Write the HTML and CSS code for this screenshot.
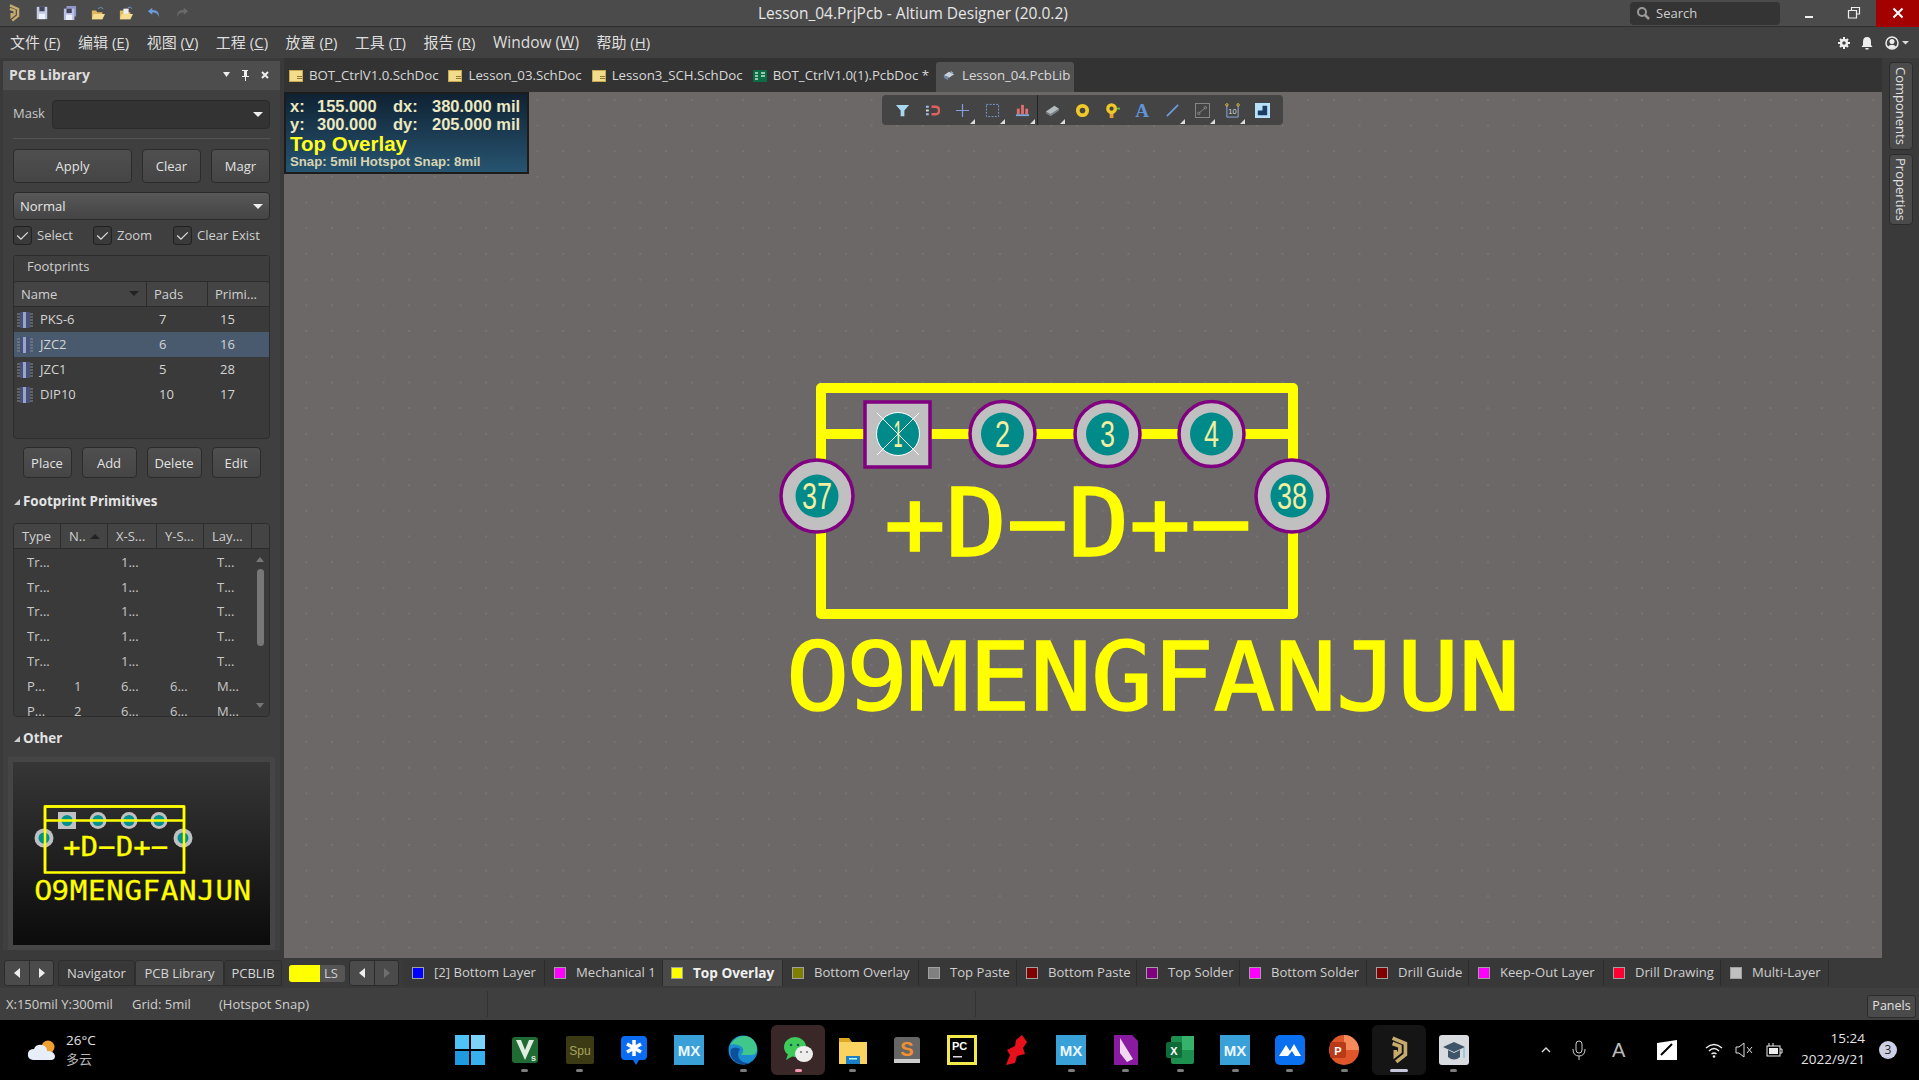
FILE: index.html
```html
<!DOCTYPE html>
<html lang="zh">
<head>
<meta charset="utf-8">
<title>Lesson_04.PrjPcb - Altium Designer (20.0.2)</title>
<link rel="stylesheet" href="styles.css">
</head>
<body>
<svg class="defs" width="0" height="0">
  <symbol id="doc" viewBox="0 0 14 12"><rect x="0.5" y="0.5" width="13" height="11" fill="#f3dc8c" stroke="#c9a94f"/><rect x="8" y="6" width="5" height="1" fill="#8a7a3a"/><rect x="8" y="8" width="5" height="1" fill="#8a7a3a"/></symbol>
  <symbol id="chip" viewBox="0 0 16 18"><rect x="3" y="1" width="10" height="16" fill="#46527a"/><rect x="6" y="1" width="3" height="16" fill="#99a4c8"/><path d="M0 3h3M0 6h3M0 9h3M0 12h3M0 15h3M13 3h3M13 6h3M13 9h3M13 12h3M13 15h3" stroke="#8c8c8c" stroke-width="1"/></symbol>
  <symbol id="logo" viewBox="0 0 24 32"><path d="M5 3 L19 9 V21 L9 29 M5 9 L13 12 V18 L8 22 V16" fill="none" stroke="#c7ab6c" stroke-width="4"/></symbol>
</svg>

<header class="titlebar">
  <div class="qa">
    <svg class="qa-logo"><use href="#logo"/></svg>
    <svg class="qa-ic" viewBox="0 0 16 16"><rect x="2" y="1" width="12" height="14" fill="#c4cbe6"/><rect x="5" y="1" width="6" height="5" fill="#41465c"/><rect x="4.500" y="9" width="7" height="6" fill="#f0f2ff"/></svg>
    <svg class="qa-ic" viewBox="0 0 16 16"><rect x="4" y="0" width="11" height="12" fill="#8f96c8"/><rect x="1" y="3" width="12" height="13" fill="#b9c0e6"/><rect x="4" y="3" width="6" height="5" fill="#41465c"/><rect x="3.500" y="10" width="7" height="6" fill="#eef0ff"/></svg>
    <svg class="qa-ic" viewBox="0 0 16 16"><path d="M1 5h5l1 2h6v8H1z" fill="#e0b95c"/><path d="M3 9h13l-3 6H1z" fill="#f5dd92"/><path d="M8 3 Q11 0 14 3" fill="none" stroke="#6e9ad0"/></svg>
    <svg class="qa-ic" viewBox="0 0 16 16"><path d="M1 5h5l1 2h6v8H1z" fill="#e0b95c"/><path d="M3 9h13l-3 6H1z" fill="#f5dd92"/><rect x="5" y="3" width="6" height="6" fill="#eee"/><path d="M10 2 Q13 0 15 3" fill="none" stroke="#6e9ad0"/></svg>
    <svg class="qa-ic" viewBox="0 0 16 16"><path d="M6 2 L1 6 L6 10 V7.500 Q12 7 14 13 Q14 4 6 4.500z" fill="#6c9ad8"/></svg>
    <svg class="qa-ic" viewBox="0 0 16 16"><path d="M10 2 L15 6 L10 10 V7.500 Q4 7 2 13 Q2 4 10 4.500z" fill="#6a6a6a"/></svg>
  </div>
  <div class="title-text">Lesson_04.PrjPcb - Altium Designer (20.0.2)</div>
  <div class="search">
    <svg class="search-ic" viewBox="0 0 14 14"><circle cx="6" cy="6" r="4" fill="none" stroke="#9a9a9a" stroke-width="2"/><path d="M9 9l4 4" stroke="#9a9a9a" stroke-width="2.500"/></svg>
    <span>Search</span>
  </div>
  <div class="winbtn"><svg viewBox="0 0 14 14"><rect x="3" y="10" width="8" height="2" fill="#eee"/></svg></div>
  <div class="winbtn"><svg viewBox="0 0 14 14"><path d="M4.500 4V1.500H12.500V8H10M1.500 4.500H9.500V12H1.500z" fill="none" stroke="#eee" stroke-width="1.200"/></svg></div>
  <div class="winbtn close"><svg viewBox="0 0 14 14"><path d="M2.500 2.500l9 9M11.500 2.500l-9 9" stroke="#fff" stroke-width="2"/></svg></div>
</header>

<nav class="menubar">
  <span class="m">文件 (<u>F</u>)</span>
  <span class="m">编辑 (<u>E</u>)</span>
  <span class="m">视图 (<u>V</u>)</span>
  <span class="m">工程 (<u>C</u>)</span>
  <span class="m">放置 (<u>P</u>)</span>
  <span class="m">工具 (<u>T</u>)</span>
  <span class="m">报告 (<u>R</u>)</span>
  <span class="m win">Window (<u>W</u>)</span>
  <span class="m">帮助 (<u>H</u>)</span>
  <div class="menu-right">
    <svg class="mr-ic" viewBox="0 0 14 14"><circle cx="7" cy="7" r="3" fill="none" stroke="#eee" stroke-width="2.500"/><path d="M7 1v2M7 11v2M1 7h2M11 7h2M3 3l1.500 1.500M9.500 9.500L11 11M11 3L9.500 4.500M4.500 9.500L3 11" stroke="#eee" stroke-width="2"/></svg>
    <svg class="mr-ic" viewBox="0 0 14 14"><path d="M7 1Q3 1 3 6V9L1.500 11H12.500L11 9V6Q11 1 7 1z" fill="#eee"/><rect x="5.500" y="12" width="3" height="1.500" fill="#eee"/></svg>
    <svg class="mr-user" viewBox="0 0 26 14"><circle cx="7" cy="7" r="6" fill="none" stroke="#eee" stroke-width="1.500"/><circle cx="7" cy="5.500" r="2.500" fill="#eee"/><path d="M2.500 11Q7 6.500 11.500 11L7 13z" fill="#eee"/><path d="M17 5h7l-3.500 3.500z" fill="#ddd"/></svg>
  </div>
</nav>

<div class="workspace">
  <aside class="leftcol">
    <section class="panel">
      <div class="panel-head">
        <span class="panel-title">PCB Library</span>
        <svg class="ph-ic" viewBox="0 0 58 12"><path d="M0 3h7l-3.500 5z" fill="#eee"/><path d="M19 1h6v1h-1v5h2v1h-3v4h-1V8h-3V7h2V2h-2z" fill="#eee"/><path d="M39 3l6 6M45 3l-6 6" stroke="#eee" stroke-width="2"/></svg>
      </div>
      <div class="panel-body">
        <div class="mask-row">
          <span class="mask-label">Mask</span>
          <div class="mask-field"><i class="caret"></i></div>
        </div>
        <div class="divider"></div>
        <div class="btn-row">
          <button class="btn b-apply">Apply</button>
          <button class="btn b-clear">Clear</button>
          <button class="btn b-clear">Magr</button>
        </div>
        <div class="select">Normal<i class="caret"></i></div>
        <div class="check-row">
          <label class="chk c1"><svg class="box" viewBox="0 0 18 18"><rect x="0.500" y="0.500" width="17" height="17" rx="3" fill="#3a3a3a" stroke="#222"/><path d="M4 9l3.500 3.500L14 6" fill="none" stroke="#ddd" stroke-width="1.200"/></svg>Select</label>
          <label class="chk c2"><svg class="box" viewBox="0 0 18 18"><rect x="0.500" y="0.500" width="17" height="17" rx="3" fill="#3a3a3a" stroke="#222"/><path d="M4 9l3.500 3.500L14 6" fill="none" stroke="#ddd" stroke-width="1.200"/></svg>Zoom</label>
          <label class="chk"><svg class="box" viewBox="0 0 18 18"><rect x="0.500" y="0.500" width="17" height="17" rx="3" fill="#3a3a3a" stroke="#222"/><path d="M4 9l3.500 3.500L14 6" fill="none" stroke="#ddd" stroke-width="1.200"/></svg>Clear Exist</label>
        </div>
        <div class="fp-box">
          <div class="fp-title">Footprints</div>
          <div class="fp-table">
            <div class="fp-row fp-head"><span class="hc">Name<i class="sort-d"></i></span><span class="hc">Pads</span><span class="hc">Primi...</span></div>
            <div class="fp-row"><span class="nm"><svg class="chip"><use href="#chip"/></svg>PKS-6</span><span class="pd">7</span><span class="pr">15</span></div>
            <div class="fp-row sel"><span class="nm"><svg class="chip"><use href="#chip"/></svg>JZC2</span><span class="pd">6</span><span class="pr">16</span></div>
            <div class="fp-row"><span class="nm"><svg class="chip"><use href="#chip"/></svg>JZC1</span><span class="pd">5</span><span class="pr">28</span></div>
            <div class="fp-row"><span class="nm"><svg class="chip"><use href="#chip"/></svg>DIP10</span><span class="pd">10</span><span class="pr">17</span></div>
          </div>
        </div>
        <div class="action-row">
          <button class="btn a1">Place</button>
          <button class="btn a2">Add</button>
          <button class="btn a2">Delete</button>
          <button class="btn a1">Edit</button>
        </div>
        <div class="sec-head h1"><i class="tri"></i>Footprint Primitives</div>
        <div class="prim-table">
          <div class="prim-row prim-head"><span>Type</span><span>N..<i class="sort-u"></i></span><span>X-S...</span><span>Y-S...</span><span>Lay...</span></div>
          <div class="prim-body">
            <div class="prim-rows">
              <div class="prim-row"><span>Tr...</span><span></span><span>1...</span><span></span><span>T...</span></div>
              <div class="prim-row"><span>Tr...</span><span></span><span>1...</span><span></span><span>T...</span></div>
              <div class="prim-row"><span>Tr...</span><span></span><span>1...</span><span></span><span>T...</span></div>
              <div class="prim-row"><span>Tr...</span><span></span><span>1...</span><span></span><span>T...</span></div>
              <div class="prim-row"><span>Tr...</span><span></span><span>1...</span><span></span><span>T...</span></div>
              <div class="prim-row"><span>P...</span><span>1</span><span>6...</span><span>6...</span><span>M...</span></div>
              <div class="prim-row"><span>P...</span><span>2</span><span>6...</span><span>6...</span><span>M...</span></div>
            </div>
            <div class="scroll"><i class="s-up"></i><i class="s-thumb"></i><i class="s-down"></i></div>
          </div>
        </div>
        <div class="sec-head h2"><i class="tri"></i>Other</div>
        <div class="preview">
          <svg class="mini" viewBox="13 761 257 183">
            <path class="m-line" d="M45 805.500H184V871.500H45Z"/>
            <rect class="m-pad" x="58" y="811" width="18" height="17"/><circle class="m-hole" cx="67" cy="819.500" r="5.500"/>
            <circle class="m-pad" cx="98" cy="819.500" r="8.500"/><circle class="m-hole" cx="98" cy="819.500" r="5.500"/>
            <circle class="m-pad" cx="129" cy="819.500" r="8.500"/><circle class="m-hole" cx="129" cy="819.500" r="5.500"/>
            <circle class="m-pad" cx="159" cy="819.500" r="8.500"/><circle class="m-hole" cx="159" cy="819.500" r="5.500"/>
            <circle class="m-pad" cx="44" cy="837" r="9.500"/><circle class="m-hole" cx="44" cy="837" r="5.500"/>
            <circle class="m-pad" cx="183" cy="837" r="9.500"/><circle class="m-hole" cx="183" cy="837" r="5.500"/>
            <path class="m-line" d="M45 805.500H184M45 819.500H184M45 805.500V871.500M184 805.500V871.500"/>
            <text class="mini-a" transform="translate(63 855) scale(1.100 1)">+D−D+−</text>
            <text class="mini-b" transform="translate(34 899) scale(1.100 1)"><tspan class="zero">0</tspan><tspan x="16">9MENGFANJUN</tspan></text>
          </svg>
        </div>
      </div>
    </section>
    <div class="left-tabs">
      <div class="navpair"><i class="nl"></i><i class="nr"></i></div>
      <span class="ltab t-nav">Navigator</span>
      <span class="ltab on t-lib">PCB Library</span>
      <span class="ltab t-pcb">PCBLIB</span>
    </div>
  </aside>

  <main class="center">
    <div class="doctabs">
      <span class="dt"><svg class="dt-ic"><use href="#doc"/></svg>BOT_CtrlV1.0.SchDoc</span>
      <span class="dt"><svg class="dt-ic"><use href="#doc"/></svg>Lesson_03.SchDoc</span>
      <span class="dt"><svg class="dt-ic"><use href="#doc"/></svg>Lesson3_SCH.SchDoc</span>
      <span class="dt"><svg class="dt-ic" viewBox="0 0 14 12"><rect width="14" height="12" fill="#0d6b46"/><path d="M2 3h3M2 6h3M2 9h3M8 3h4M8 6h4" stroke="#bfe8d0" stroke-width="1.500"/></svg>BOT_CtrlV1.0(1).PcbDoc *</span>
      <span class="dt active"><svg class="dt-ic" viewBox="0 0 14 14"><path d="M1 6l6-4 6 3-6 4z" fill="#c8d0dc"/><path d="M1 9l5 3V8L1 6z" fill="#6f8aa8"/><path d="M9 1l3 2-2 2z" fill="#8fb0d0"/></svg>Lesson_04.PcbLib</span>
    </div>
    <div class="canvas">
      <svg class="board" viewBox="284 92 1598 866">
        <path class="y" d="M821 388H1293V614H821ZM821 434H1293"/>
        <rect class="pad" x="865" y="402" width="65" height="65"/>
        <circle class="hole" cx="898" cy="434" r="21.500"/>
        <circle class="sel-ring" cx="898" cy="434" r="21.500"/>
        <path class="sel-x" d="M877 413L919 455M919 413L877 455"/>
        <text class="pn" x="898" y="447" text-anchor="middle" textLength="9" lengthAdjust="spacingAndGlyphs">1</text>
        <circle class="pad" cx="1002.500" cy="434" r="32.500"/><circle class="hole" cx="1002.500" cy="434" r="21.500"/>
        <text class="pn" x="1002.500" y="447" text-anchor="middle" textLength="15" lengthAdjust="spacingAndGlyphs">2</text>
        <circle class="pad" cx="1107.500" cy="434" r="32.500"/><circle class="hole" cx="1107.500" cy="434" r="21.500"/>
        <text class="pn" x="1107.500" y="447" text-anchor="middle" textLength="15" lengthAdjust="spacingAndGlyphs">3</text>
        <circle class="pad" cx="1211.500" cy="434" r="32.500"/><circle class="hole" cx="1211.500" cy="434" r="21.500"/>
        <text class="pn" x="1211.500" y="447" text-anchor="middle" textLength="15" lengthAdjust="spacingAndGlyphs">4</text>
        <circle class="pad" cx="817" cy="496" r="36"/><circle class="hole" cx="817" cy="496" r="21.500"/>
        <text class="pn" x="817" y="509" text-anchor="middle" textLength="30" lengthAdjust="spacingAndGlyphs">37</text>
        <circle class="pad" cx="1292" cy="496" r="36"/><circle class="hole" cx="1292" cy="496" r="21.500"/>
        <text class="pn" x="1292" y="509" text-anchor="middle" textLength="30" lengthAdjust="spacingAndGlyphs">38</text>
        <text class="big" transform="translate(884 556) scale(1.080 1)">+D−D+−</text>
        <text class="big" transform="translate(785 710) scale(1.080 1)"><tspan class="zero">0</tspan><tspan x="56.700">9MENGFANJUN</tspan></text>
      </svg>
      <div class="info">
        <div class="info-l"><span class="i1">x:</span><span class="i2">155.000</span><span class="i3">dx:</span><span class="i4">380.000 mil</span></div>
        <div class="info-l"><span class="i1">y:</span><span class="i2">300.000</span><span class="i3">dy:</span><span class="i4">205.000 mil</span></div>
        <div class="info-layer">Top Overlay</div>
        <div class="info-snap">Snap: 5mil Hotspot Snap: 8mil</div>
      </div>
      <div class="toolbar">
        <span class="tb"><svg viewBox="0 0 16 16"><path d="M1 2H15L10 8V14H6V8z" fill="#a8d8f0"/></svg></span>
        <span class="tb"><svg viewBox="0 0 16 16"><path d="M7 4H11Q15 4 15 8T11 12H7" fill="none" stroke="#e06060" stroke-width="2.500"/><path d="M1 4h3M1 12h3" stroke="#9cc0ec" stroke-width="2"/><path d="M1 8h3" stroke="#e0e0e0" stroke-width="2"/></svg></span>
        <span class="tb cn"><svg viewBox="0 0 16 16"><path d="M8 1V15M1 8H15" stroke="#7e9fdc" stroke-width="1.300"/></svg></span>
        <span class="tb cn"><svg viewBox="0 0 16 16"><rect x="1.500" y="1.500" width="13" height="13" fill="none" stroke="#7e9fdc" stroke-dasharray="2 1.500"/></svg></span>
        <span class="tb cn sep"><svg viewBox="0 0 16 16"><path d="M1 13H15" stroke="#7ea8e0" stroke-width="2"/><rect x="2" y="6" width="3" height="6" fill="#e07070"/><rect x="6.500" y="2" width="3" height="10" fill="#e07070"/><rect x="11" y="6" width="3" height="6" fill="#e07070"/></svg></span>
        <span class="tb cn"><svg viewBox="0 0 16 16"><path d="M1 9L10 3L15 6L6 12z" fill="#b4bcc0"/><path d="M1 9L6 12V14L1 11zM6 12L15 6V8L6 14z" fill="#7c8488"/></svg></span>
        <span class="tb"><svg viewBox="0 0 16 16"><circle cx="8" cy="8" r="5" fill="none" stroke="#f0c828" stroke-width="4"/></svg></span>
        <span class="tb"><svg viewBox="0 0 16 16"><path d="M10 6H16" stroke="#50c050" stroke-width="2"/><rect x="5" y="10" width="4" height="6" fill="#e8a030"/><circle cx="7" cy="6" r="4" fill="none" stroke="#f0c828" stroke-width="3.500"/></svg></span>
        <span class="tb"><span class="tb-a">A</span></span>
        <span class="tb cn"><svg viewBox="0 0 16 16"><path d="M2 14L14 2" stroke="#6a9ad8" stroke-width="1.800"/></svg></span>
        <span class="tb cn"><svg viewBox="0 0 16 16"><rect x="0.500" y="0.500" width="15" height="15" fill="none" stroke="#8a8a8a"/><path d="M4 11L11 5" stroke="#888" stroke-width="1"/><circle cx="4" cy="11" r="1.300" fill="none" stroke="#888"/><circle cx="11" cy="5" r="1.300" fill="none" stroke="#888"/></svg></span>
        <span class="tb cn"><svg viewBox="0 0 16 16"><path d="M2 3V15H14V3" fill="none" stroke="#8fb0e0"/><circle cx="2" cy="2" r="1.300" fill="none" stroke="#e8c040"/><circle cx="14" cy="2" r="1.300" fill="none" stroke="#e8c040"/><text class="tb-10" x="8" y="12" text-anchor="middle">10</text></svg></span>
        <span class="tb"><svg viewBox="0 0 16 16"><rect width="16" height="16" fill="#b8e0f8"/><path d="M3 13V8H8V3H13V13z" fill="#1c3c64"/></svg></span>
      </div>
    </div>
    <div class="layerbar">
      <div class="ls"><i class="ls-sw"></i><span>LS</span></div>
      <div class="navpair small"><i class="nl"></i><i class="nr dim"></i></div>
      <span class="lt l1"><i class="sw blue"></i>[2] Bottom Layer</span>
      <span class="lt l2"><i class="sw mag"></i>Mechanical 1</span>
      <span class="lt on l3"><i class="sw yel"></i>Top Overlay</span>
      <span class="lt l4"><i class="sw oli"></i>Bottom Overlay</span>
      <span class="lt l5"><i class="sw gry"></i>Top Paste</span>
      <span class="lt l6"><i class="sw mar"></i>Bottom Paste</span>
      <span class="lt l7"><i class="sw pur"></i>Top Solder</span>
      <span class="lt l8"><i class="sw mag"></i>Bottom Solder</span>
      <span class="lt l9"><i class="sw mar"></i>Drill Guide</span>
      <span class="lt l10"><i class="sw mag"></i>Keep-Out Layer</span>
      <span class="lt l11"><i class="sw red"></i>Drill Drawing</span>
      <span class="lt l12"><i class="sw sil"></i>Multi-Layer</span>
    </div>
  </main>

  <aside class="rightstrip">
    <span class="vtab v1">Components</span>
    <span class="vtab v2">Properties</span>
  </aside>
</div>

<footer class="status">
  <span class="st s1">X:150mil Y:300mil</span>
  <span class="st s2">Grid: 5mil</span>
  <span class="st s3">(Hotspot Snap)</span>
  <i class="st-div d1"></i>
  <i class="st-div d2"></i>
  <button class="panels">Panels</button>
</footer>

<div class="taskbar">
  <div class="weather">
    <svg class="w-ic" viewBox="0 0 30 24"><circle cx="21" cy="9" r="6.500" fill="#f0a030"/><path d="M6 22Q0 21 1 15Q2 11 7 11Q9 6 15 7Q20 8 20 13Q27 13 28 18Q28 22 24 22z" fill="#e8eef8"/></svg>
    <div class="w-t"><div>26°C</div><div class="w-s">多云</div></div>
  </div>
  <div class="apps">
    <span class="app"><svg viewBox="0 0 30 30"><rect x="0" y="0" width="14" height="14" fill="#4fc3f7"/><rect x="16" y="0" width="14" height="14" fill="#7cd4fa"/><rect x="0" y="16" width="14" height="14" fill="#1e9ae0"/><rect x="16" y="16" width="14" height="14" fill="#38b0ee"/></svg></span>
    <span class="app dot"><svg viewBox="0 0 30 30"><rect x="2" y="2" width="26" height="26" rx="3" fill="#1f6b33"/><path d="M6 5L15 25L24 5H19L15 15L11 5z" fill="#dfeee0"/><text class="ti-s" x="21" y="26">s</text></svg></span>
    <span class="app dot"><svg viewBox="0 0 30 30"><rect x="1" y="1" width="28" height="28" rx="2" fill="#3b3a14"/><text class="ti-spu" x="15" y="20" text-anchor="middle">Spu</text></svg></span>
    <span class="app"><svg viewBox="0 0 30 30"><path d="M6 1H24Q28 1 28 5V21Q28 25 24 25H20L17 30L14 25H6Q2 25 2 21V5Q2 1 6 1z" fill="#0a6cf0"/><path d="M15 5V21M8 9L22 17M22 9L8 17" stroke="#fff" stroke-width="3.500"/></svg></span>
    <span class="app"><svg viewBox="0 0 30 30"><rect width="30" height="30" fill="#3aa0d8"/><text class="ti-mx" x="15" y="21" text-anchor="middle">MX</text></svg></span>
    <span class="app dot"><svg viewBox="0 0 30 30"><circle cx="15" cy="15" r="14.500" fill="#1b8ccf"/><path d="M2 10Q8 0 18 1Q28 3 29 14Q29 20 23 20H13Q17 16 14 12Q8 8 2 10z" fill="#3fc88a"/><path d="M3 14Q8 11 12 14Q7 22 15 27Q20 29 24 27Q16 32 8 27Q1 22 3 14z" fill="#0c4f9a"/></svg></span>
    <span class="app tile-w"><svg viewBox="0 0 30 30"><ellipse cx="12" cy="12" rx="11" ry="10" fill="#3ecb5a"/><path d="M5 19L3 25L10 21z" fill="#3ecb5a"/><ellipse cx="21" cy="19" rx="9" ry="8" fill="#eee"/><circle cx="8" cy="10" r="1.300" fill="#155"/><circle cx="15" cy="10" r="1.300" fill="#155"/><circle cx="18" cy="17" r="1.100" fill="#777"/><circle cx="24" cy="17" r="1.100" fill="#777"/></svg></span>
    <span class="app dot"><svg viewBox="0 0 30 30"><path d="M1 3H11L14 7H29V29H1z" fill="#e0a820"/><rect x="1" y="7" width="28" height="22" fill="#fbd360"/><rect x="8" y="21" width="14" height="8" fill="#1a7ec8"/><rect x="11" y="23" width="8" height="1.500" fill="#bfe"/></svg></span>
    <span class="app"><svg viewBox="0 0 30 30"><rect x="2" y="2" width="26" height="26" rx="3" fill="#666"/><rect x="2" y="24" width="26" height="4" fill="#ccc"/><text class="ti-s2" x="15" y="21" text-anchor="middle">S</text></svg></span>
    <span class="app"><svg viewBox="0 0 30 30"><rect x="1.500" y="1.500" width="27" height="27" fill="#000" stroke="#f3e94a" stroke-width="3"/><text class="ti-pc" x="5" y="15">PC</text><rect x="6" y="21" width="9" height="1.500" fill="#ddd"/></svg></span>
    <span class="app"><svg viewBox="0 0 30 30"><path d="M20 0L25 7L21 13L23 19L15 21L13 28L4 30L8 20L5 15L13 11L14 5z" fill="#e8101a"/></svg></span>
    <span class="app dot"><svg viewBox="0 0 30 30"><rect width="30" height="30" fill="#3aa0d8"/><text class="ti-mx" x="15" y="21" text-anchor="middle">MX</text></svg></span>
    <span class="app dot"><svg viewBox="0 0 30 30"><path d="M3 0H21L27 6V30H3z" fill="#8a1aa0"/><path d="M9 3L22 24L16 27L9 18z" fill="#f0d8f0"/></svg></span>
    <span class="app dot"><svg viewBox="0 0 30 30"><rect x="6" y="1" width="23" height="28" rx="2" fill="#1d8f4e"/><rect x="17" y="1" width="12" height="14" fill="#37b26a"/><rect x="1" y="7" width="16" height="16" rx="2" fill="#0f6b38"/><text class="ti-x" x="9" y="20" text-anchor="middle">X</text></svg></span>
    <span class="app dot"><svg viewBox="0 0 30 30"><rect width="30" height="30" fill="#3aa0d8"/><text class="ti-mx" x="15" y="21" text-anchor="middle">MX</text></svg></span>
    <span class="app dot"><svg viewBox="0 0 30 30"><rect width="30" height="30" rx="5" fill="#0a70f0"/><path d="M4 21L11 10L15 16L19 9L26 21H20L17 16L13 21z" fill="#fff"/></svg></span>
    <span class="app dot"><svg viewBox="0 0 30 30"><circle cx="15" cy="15" r="15" fill="#e0552a"/><path d="M15 0A15 15 0 0 1 30 15H15z" fill="#f58a5c"/><rect x="1" y="7" width="16" height="16" rx="2" fill="#b83a18"/><text class="ti-x" x="9" y="20" text-anchor="middle">P</text></svg></span>
    <span class="app tile-a dot-wide"><svg viewBox="0 0 24 32"><use href="#logo"/></svg></span>
    <span class="app dot"><svg viewBox="0 0 30 30"><rect width="30" height="30" rx="3" fill="#d8dce0"/><path d="M4 12L15 7L26 12L15 17z" fill="#3e5468"/><path d="M9 15V22Q15 27 21 22V15L15 18z" fill="#3e5468"/><path d="M25 13V23" stroke="#5fb8d8"/></svg></span>
  </div>
  <div class="tray">
    <svg class="tr t-ch" viewBox="0 0 12 12"><path d="M2 8L6 4L10 8" fill="none" stroke="#ddd" stroke-width="1.300"/></svg>
    <svg class="tr t-mic" viewBox="0 0 16 20"><rect x="5" y="1" width="6" height="12" rx="3" fill="none" stroke="#ccc"/><path d="M2 9Q2 16 8 16T14 9M8 16V20" fill="none" stroke="#ccc"/></svg>
    <span class="t-a">A</span>
    <svg class="tr t-ink" viewBox="0 0 20 20"><path d="M0 3L20 0V20H0z" fill="#fff"/><path d="M4 15L15 4" stroke="#000" stroke-width="2"/></svg>
    <svg class="tr t-wifi" viewBox="0 0 18 16"><path d="M1 6Q9 -1 17 6M4 9Q9 4 14 9M6.500 12Q9 10 11.500 12" fill="none" stroke="#eee" stroke-width="1.500"/><circle cx="9" cy="14.500" r="1.300" fill="#eee"/></svg>
    <svg class="tr t-vol" viewBox="0 0 18 16"><path d="M1 5H4L9 1V15L4 11H1z" fill="none" stroke="#ddd"/><path d="M12 5L17 11M17 5L12 11" stroke="#ddd"/></svg>
    <svg class="tr t-bat" viewBox="0 0 18 16"><rect x="2" y="4" width="13" height="10" fill="none" stroke="#eee"/><rect x="4" y="6" width="9" height="6" fill="#eee"/><path d="M15 7H17V11H15M4 4V1M8 4V1" fill="none" stroke="#eee"/></svg>
    <div class="clock"><div>15:24</div><div>2022/9/21</div></div>
    <span class="badge">3</span>
  </div>
</div>
</body>
</html>
```
FILE: styles.css
```css
* { box-sizing: border-box; }
html, body { margin: 0; padding: 0; }
body {
  width: 1919px; height: 1080px; overflow: hidden;
  display: flex; flex-direction: column;
  background: #3e3e3e; color: #d8d8d8;
  font-family: "Open Sans", "Noto Sans CJK SC", sans-serif; font-size: 13px; line-height: 1;
}
.defs { position: absolute; }
i { display: block; font-style: normal; }
button { font: inherit; color: inherit; padding: 0; }

/* title bar */
.titlebar { height: 27px; flex: none; display: flex; align-items: center; background: #4b4b4b; border-bottom: 1px solid #2f2f2f; position: relative; }
.qa { display: flex; align-items: center; padding-left: 7px; }
.qa-logo { width: 14px; height: 20px; margin-right: 14px; }
.qa-ic { width: 14px; height: 14px; margin-right: 14px; }
.title-text { position: absolute; left: 758px; top: 6px; font-size: 15.500px; color: #e6e6e6; }
.search { margin-left: auto; width: 150px; height: 23px; display: flex; align-items: center; gap: 6px; padding-left: 6px; background: #343434; border-radius: 4px; margin-right: 6px; color: #cfcfcf; font-size: 13px; }
.search-ic { width: 14px; height: 14px; }
.winbtn { width: 45px; height: 27px; display: flex; align-items: center; justify-content: center; }
.winbtn svg { width: 14px; height: 14px; }
.winbtn.close { width: 43px; background: #a30000; }

/* menu */
.menubar { height: 31px; flex: none; display: flex; align-items: center; background: #414141; padding-left: 10px; gap: 17.500px; font-size: 15px; color: #dedede; }
.m { white-space: nowrap; }
.m.win { font-size: 15.500px; }
.menu-right { margin-left: auto; display: flex; align-items: center; gap: 9px; padding-right: 8px; }
.mr-ic { width: 14px; height: 14px; }
.mr-user { width: 26px; height: 14px; margin-left: 2px; }

/* workspace */
.workspace { height: 930px; flex: none; display: flex; background: #3a3a3a; }
.leftcol { width: 284px; flex: none; display: flex; flex-direction: column; padding: 3px 0 0 3px; }
.panel { width: 277px; height: 889px; background: #3f3f3f; flex: none; }
.panel-head { height: 29px; display: flex; align-items: center; justify-content: space-between; background: #4d4d4d; padding: 0 7px 2px 6px; }
.panel-title { font-weight: 700; font-size: 14px; color: #dcdcdc; }
.ph-ic { width: 58px; height: 12px; margin-right: -8px; }
.panel-body { padding: 10px 10px 0 10px; }
.mask-row { display: flex; align-items: center; height: 29px; }
.mask-label { width: 39px; color: #c8c8c8; padding-bottom: 2px; }
.mask-field { flex: 1; height: 29px; background: #333; border: 1px solid #2a2a2a; border-radius: 4px; display: flex; align-items: center; justify-content: flex-end; padding-right: 6px; }
.caret { width: 0; height: 0; border-left: 5px solid transparent; border-right: 5px solid transparent; border-top: 5px solid #eee; }
.divider { height: 1px; background: #555; margin-top: 9px; }
.btn-row { display: flex; gap: 10px; margin-top: 10px; height: 34px; }
.btn { background: linear-gradient(#4f4f4f, #454545); border: 1px solid #2b2b2b; border-radius: 4px; color: #e2e2e2; font-size: 13px; }
.b-apply { width: 119px; }
.b-clear { width: 59px; }
.select { height: 28px; margin-top: 9px; display: flex; align-items: center; justify-content: space-between; padding: 1px 6px 0; background: linear-gradient(#585858, #444); border: 1px solid #2b2b2b; border-radius: 4px; color: #e6e6e6; font-size: 13px; }
.check-row { display: flex; margin-top: 5px; height: 20px; }
.chk { display: flex; align-items: center; gap: 5px; color: #cfcfcf; font-size: 13px; }
.chk.c1 { width: 80px; }
.chk.c2 { width: 80px; }
.box { width: 19px; height: 19px; }
.fp-box { margin-top: 10px; height: 184px; background: #3a3a3a; border: 1px solid #2c2c2c; border-radius: 3px 3px 4px 4px; }
.fp-title { height: 25px; display: flex; align-items: center; padding: 0 0 4px 13px; background: #3d3d3d; color: #cfcfcf; }
.fp-row { display: grid; grid-template-columns: 133px 61px 1fr; height: 25px; align-items: center; font-size: 13px; }
.fp-head { height: 26px; background: #444; border-top: 1px solid #2c2c2c; border-bottom: 1px solid #2c2c2c; color: #d0d0d0; border-radius: 3px 3px 0 0; }
.hc { display: flex; align-items: center; height: 100%; padding-left: 7px; border-right: 1px solid #2c2c2c; position: relative; }
.hc:last-child { border-right: 0; }
.sort-d { position: absolute; right: 7px; top: 9px; border-left: 5px solid transparent; border-right: 5px solid transparent; border-top: 5px solid #222; }
.sel { background: #495a6e; }
.nm { display: flex; align-items: center; padding-left: 3px; color: #d4d4d4; }
.chip { width: 16px; height: 18px; margin-right: 7px; }
.pd { padding-left: 12px; color: #d4d4d4; }
.pr { padding-left: 12px; color: #d4d4d4; }
.action-row { display: flex; justify-content: center; gap: 10px; margin-top: 8px; height: 31px; }
.action-row .btn { padding-top: 2px; }
.a1 { width: 49px; }
.a2 { width: 55px; }
.sec-head { display: flex; align-items: center; font-weight: 700; font-size: 13.400px; color: #e4e4e4; padding-left: 1px; height: 16px; }
.sec-head.h1 { margin-top: 16px; }
.sec-head.h2 { margin-top: 14px; }
.tri { width: 0; height: 0; border-left: 6px solid transparent; border-bottom: 6px solid #ccc; margin-right: 3px; }
.prim-table { margin-top: 13px; height: 194px; border: 1px solid #2c2c2c; border-radius: 4px; background: #3a3a3a; overflow: hidden; }
.prim-row { display: grid; grid-template-columns: 47px 47px 49px 47px 48px; height: 24.800px; align-items: center; color: #c8c8c8; font-size: 13px; }
.prim-row span { padding-left: 13px; }
.prim-head { height: 25px; background: #444; border-bottom: 1px solid #2c2c2c; color: #cfcfcf; }
.prim-head span { padding-left: 8px; height: 100%; display: flex; align-items: center; border-right: 1px solid #2c2c2c; position: relative; }
.sort-u { position: absolute; right: 7px; top: 10px; border-left: 5px solid transparent; border-right: 5px solid transparent; border-bottom: 5px solid #222; }
.prim-body { display: flex; height: 168px; }
.prim-rows { width: 238px; flex: none; padding-top: 1px; overflow: hidden; }
.scroll { flex: 1; position: relative; }
.s-up { position: absolute; left: 4px; top: 8px; border-left: 4px solid transparent; border-right: 4px solid transparent; border-bottom: 5px solid #777; }
.s-thumb { position: absolute; left: 5px; top: 20px; width: 7px; height: 77px; background: #777; border-radius: 4px; }
.s-down { position: absolute; left: 4px; top: 154px; border-left: 4px solid transparent; border-right: 4px solid transparent; border-top: 5px solid #777; }
.preview { margin-top: 15px; height: 183px; background: linear-gradient(#363636, #0b0b0b); outline: 5px solid #454545; }
.mini { width: 257px; height: 183px; display: block; }
.m-line { fill: none; stroke: #ffff00; stroke-width: 2.500px; }
.m-pad { fill: #c0c0c0; }
.m-hole { fill: #008f8f; }
.mini-a, .mini-b { font-family: "DejaVu Sans Mono", monospace; font-size: 26.500px; fill: #ffff00; stroke: #ffff00; stroke-width: 0.300px; }
.mini-b { letter-spacing: 0.600px; }
.zero { font-family: "DejaVu Sans", sans-serif; }

.left-tabs { display: flex; align-items: stretch; height: 26px; margin-top: 10px; margin-left: 1px; }
.navpair { width: 50px; height: 26px; display: flex; background: #4b4b4b; border: 1px solid #2b2b2b; border-radius: 3px; }
.nl, .nr { flex: 1; position: relative; }
.nl { border-right: 1px solid #2b2b2b; }
.nl::after { content: ""; position: absolute; left: 9px; top: 7px; border-top: 5px solid transparent; border-bottom: 5px solid transparent; border-right: 6px solid #eee; }
.nr::after { content: ""; position: absolute; left: 9px; top: 7px; border-top: 5px solid transparent; border-bottom: 5px solid transparent; border-left: 6px solid #eee; }
.nr.dim::after { border-left-color: #6e6e6e; }
.ltab { display: flex; align-items: center; justify-content: center; background: #383838; border: 1px solid #2e2e2e; border-radius: 3px 3px 0 0; color: #d6d6d6; font-size: 13px; }
.t-nav { width: 77px; margin-left: 4px; }
.t-lib { width: 89px; background: #454545; }
.t-pcb { width: 58px; }

/* center */
.center { width: 1598px; flex: none; display: flex; flex-direction: column; }
.doctabs { height: 34px; flex: none; display: flex; align-items: flex-end; background: #333; padding-left: 5px; }
.dt { height: 30px; display: flex; align-items: center; gap: 6px; margin-right: 10px; padding-bottom: 2px; color: #d8d8d8; font-size: 13.250px; white-space: nowrap; }
.dt-ic { width: 14px; height: 12px; flex: none; }
.dt.active { background: #525252; border-radius: 3px 3px 0 0; padding: 0 4px 2px 6px; margin-left: -3px; margin-right: 0; }
.canvas { height: 866px; flex: none; position: relative; background-color: #6c6868; background-image: radial-gradient(circle, #787474 0.8px, transparent 1.200px); background-size: 25.700px 25.700px; background-position: 9.500px -5px; }
.board { position: absolute; left: 0; top: 0; width: 1598px; height: 866px; }
.y { fill: none; stroke: #ffff00; stroke-width: 10px; stroke-linejoin: round; }
.pad { fill: #c0c0c0; stroke: #800080; stroke-width: 3.500px; }
.hole { fill: #008a8a; }
.sel-ring { fill: none; stroke: #fff; stroke-width: 1px; }
.sel-x { stroke: #fff; stroke-width: 1px; }
.pn { font-family: "Liberation Sans", sans-serif; font-size: 36px; fill: #f4eea0; }
.big { font-family: "DejaVu Sans Mono", monospace; font-size: 95px; fill: #ffff00; stroke: #ffff00; stroke-width: 1.600px; letter-spacing: -0.500px; }
.info { position: absolute; left: 0; top: 0; width: 245px; height: 82px; padding: 3px 4px 0; background: linear-gradient(#0f2233, #275470); border: 2px solid #1c1c1c; font-family: "Liberation Sans", sans-serif; font-weight: 700; color: #ece8c0; overflow: hidden; }
.info-l { display: flex; font-size: 16.500px; height: 18px; align-items: center; }
.i1 { width: 27px; }
.i2 { width: 76px; }
.i3 { width: 39px; }
.info-layer { font-size: 20.500px; color: #ffff20; height: 22px; display: flex; align-items: center; }
.info-snap { font-size: 13.200px; height: 13px; color: #d8d4b4; }
.toolbar { position: absolute; left: 598px; top: 3px; width: 401px; height: 30px; background: #444; border-radius: 4px; display: flex; align-items: center; padding-left: 5px; }
.tb { width: 30px; height: 30px; display: flex; align-items: center; justify-content: center; position: relative; flex: none; }
.tb svg { width: 15px; height: 15px; }
.tb.cn::after { content: ""; position: absolute; right: 2px; bottom: 1px; border-left: 5px solid transparent; border-bottom: 5px solid #ddd; }
.tb.sep { box-shadow: 1px 0 0 0 #222; }
.tb-a { font-family: "Liberation Serif", serif; font-size: 19px; font-weight: 700; color: #5f95d8; }
.tb-10 { font-family: "Liberation Sans", sans-serif; font-size: 8px; fill: #ddd; }

/* layer bar */
.layerbar { height: 30px; flex: none; display: flex; align-items: center; background: #3a3a3a; padding-left: 5px; }
.ls { display: flex; width: 56px; height: 17px; border-radius: 3px; background: #555; align-items: center; color: #d0d0d0; font-size: 13px; overflow: hidden; }
.ls-sw { width: 31px; height: 17px; background: #ffff00; }
.ls span { padding-left: 4px; }
.navpair.small { margin-left: 4px; height: 26px; }
.lt { display: flex; align-items: center; height: 26px; flex: none; padding-left: 9px; background: #383838; border-right: 1px solid #2c2c2c; color: #cfcfcf; font-size: 13.100px; white-space: nowrap; }
.lt.on { background: #494949; color: #f0f0f0; font-weight: 700; font-size: 13.600px; padding-left: 8px; }
.sw { width: 12px; height: 12px; border: 1px solid #a0a0a0; margin-right: 10px; flex: none; }
.l1 { margin-left: 4px; width: 142px; } .l2 { width: 118px; } .l3 { width: 120px; } .l4 { width: 136px; } .l5 { width: 98px; } .l6 { width: 120px; }
.l7 { width: 103px; } .l8 { width: 127px; } .l9 { width: 102px; } .l10 { width: 135px; } .l11 { width: 117px; } .l12 { width: 108px; }
.blue { background: #0000ff; } .mag { background: #ff00ff; } .yel { background: #ffff00; } .oli { background: #808000; }
.gry { background: #808080; } .mar { background: #800000; } .pur { background: #800080; } .red { background: #ff0033; } .sil { background: #c0c0c0; }

/* right strip */
.rightstrip { flex: 1; display: flex; flex-direction: column; align-items: center; gap: 4px; padding-top: 4px; }
.vtab { writing-mode: vertical-rl; width: 24px; display: flex; align-items: center; justify-content: center; background: #4b4b4b; border: 1px solid #2c2c2c; border-radius: 4px; color: #e0e0e0; font-size: 13px; }
.v1 { height: 88px; }
.v2 { height: 71px; }

/* status */
.status { height: 32px; flex: none; display: flex; align-items: center; background: #3f3f3f; position: relative; color: #cfcfcf; font-size: 13px; }
.st { position: absolute; top: 10px; }
.s1 { left: 6px; } .s2 { left: 132px; } .s3 { left: 219px; }
.st-div { position: absolute; top: 3px; width: 1px; height: 26px; background: #333; }
.d1 { left: 487px; } .d2 { left: 975px; }
.panels { position: absolute; right: 3px; top: 7px; width: 49px; height: 23px; background: #4a4a4a; border: 1px solid #2b2b2b; border-radius: 3px; color: #e0e0e0; font-size: 12.500px; }

/* taskbar */
.taskbar { height: 60px; flex: none; display: flex; align-items: center; background: #000; position: relative; }
.weather { width: 443px; flex: none; display: flex; align-items: center; padding-left: 27px; gap: 9px; }
.w-ic { width: 30px; height: 24px; }
.w-t { font-size: 13.500px; color: #e0e0e0; display: flex; flex-direction: column; gap: 6px; }
.w-s { color: #b8b8b8; font-size: 13px; }
.apps { display: flex; width: 1038px; flex: none; }
.app { width: 54.630px; height: 50px; display: flex; align-items: center; justify-content: center; position: relative; flex: none; }
.app svg { width: 30px; height: 30px; }
.dot::after, .tile-w::after, .dot-wide::after { content: ""; position: absolute; bottom: 3px; left: 50%; width: 7px; height: 3px; margin-left: -3.500px; border-radius: 2px; background: #7c7c7c; }
.tile-w { background: #3a2828; border-radius: 6px; }
.tile-w::after { background: #f49ab0; }
.tile-a { background: #151515; border-radius: 6px; }
.tile-a svg { width: 22px; height: 30px; }
.dot-wide::after { width: 18px; margin-left: -9px; background: #c8c8dc; }
.ti-s { font: 700 9px "Liberation Sans", sans-serif; fill: #dfeee0; }
.ti-spu { font: 400 12px "Liberation Sans", sans-serif; fill: #a8a45c; }
.ti-mx { font: 700 15px "Liberation Sans", sans-serif; fill: #eaf6fc; }
.ti-s2 { font: 700 20px "Liberation Sans", sans-serif; fill: #f09030; }
.ti-pc { font: 700 11px "Liberation Sans", sans-serif; fill: #fff; }
.ti-x { font: 700 11px "Liberation Sans", sans-serif; fill: #fff; }
.tray { flex: 1; position: relative; height: 60px; }
.tr { position: absolute; }
.t-ch { left: 59px; top: 24px; width: 12px; height: 12px; }
.t-mic { left: 90px; top: 19px; width: 16px; height: 22px; }
.t-a { position: absolute; left: 131px; top: 20px; font-size: 20px; font-family: "Liberation Sans", sans-serif; color: #bbb; }
.t-ink { left: 176px; top: 20px; width: 20px; height: 20px; }
.t-wifi { left: 224px; top: 22px; width: 18px; height: 16px; }
.t-vol { left: 254px; top: 22px; width: 18px; height: 16px; }
.t-bat { left: 284px; top: 22px; width: 18px; height: 16px; }
.clock { position: absolute; right: 54px; top: 12px; text-align: right; font-size: 13.500px; color: #e4e4e4; display: flex; flex-direction: column; gap: 7px; }
.badge { position: absolute; left: 398px; top: 21px; width: 18px; height: 18px; border-radius: 50%; background: #cdd0e4; color: #222; font-size: 12px; display: flex; align-items: center; justify-content: center; }
```
